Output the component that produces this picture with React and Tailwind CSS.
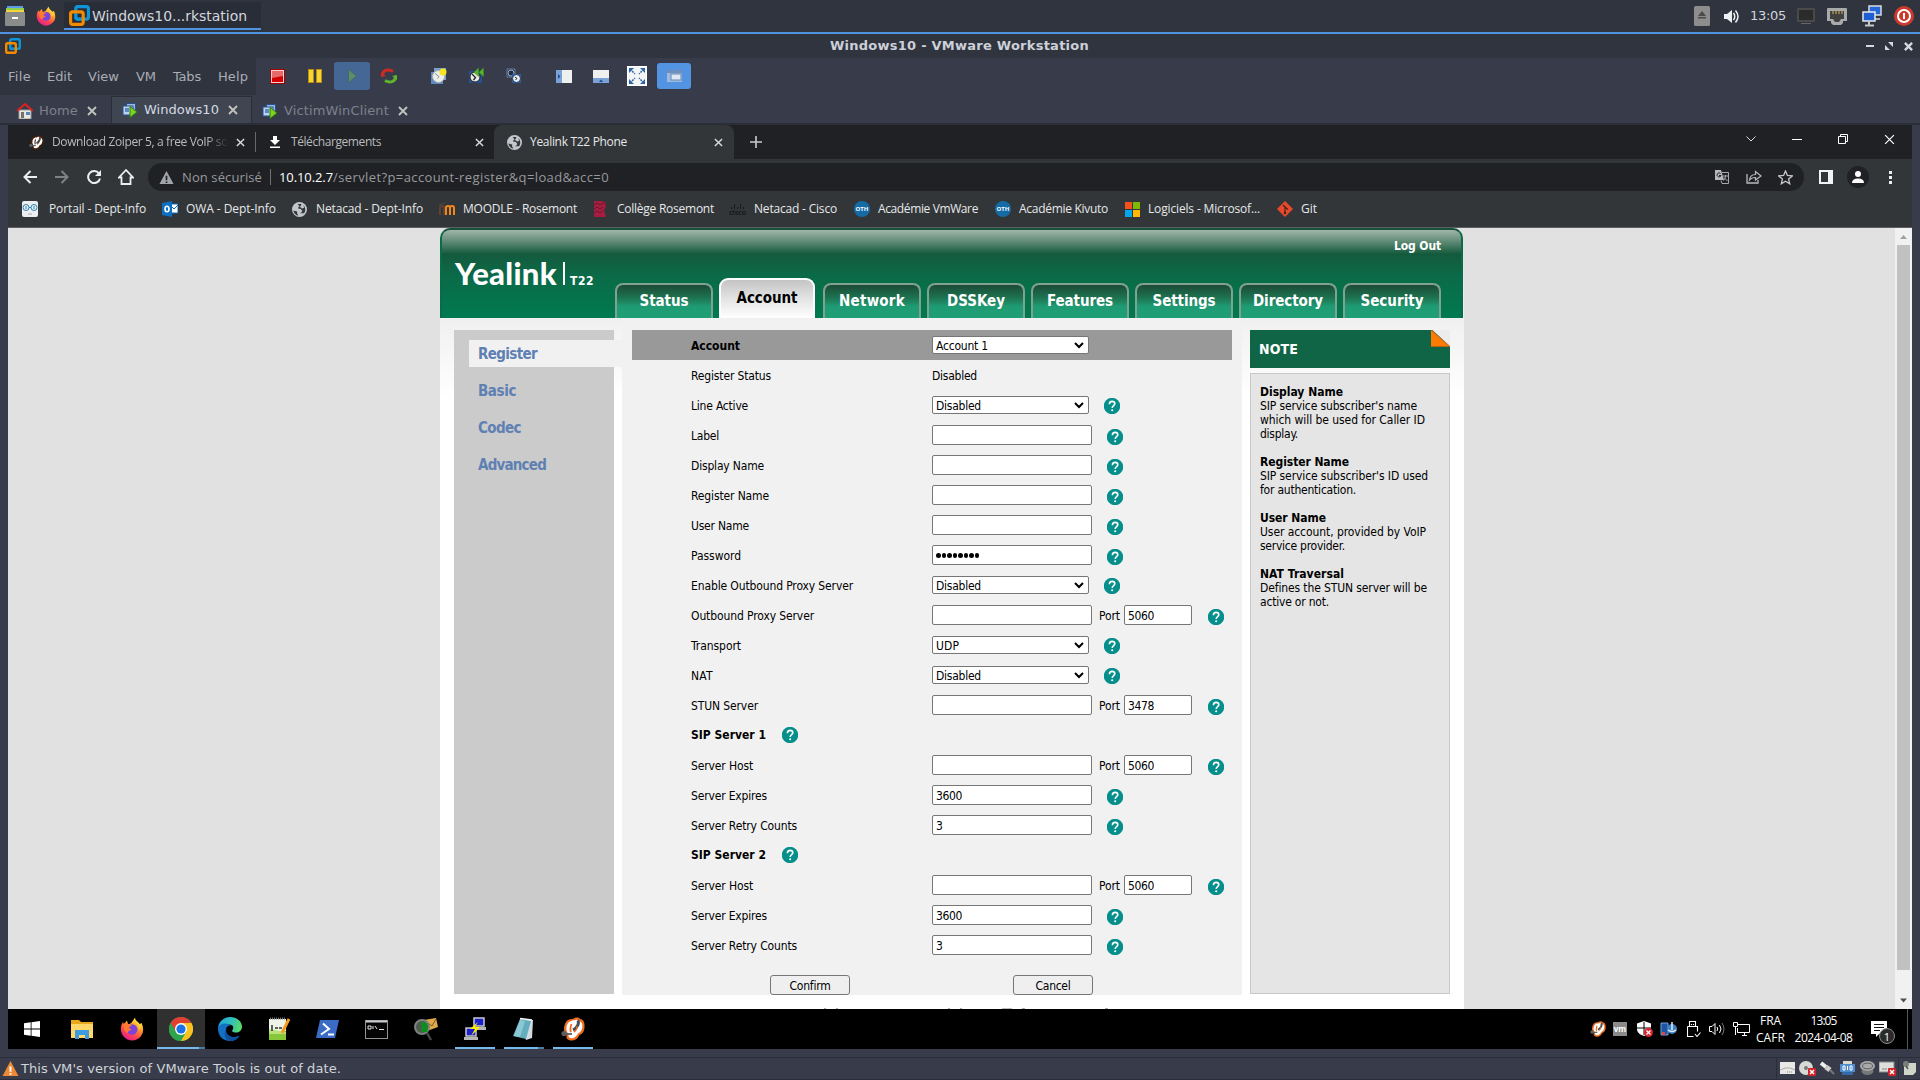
import React, { useLayoutEffect, useRef, useState } from "react";

/* Text whose tracking is adjusted so that the run is exactly w pixels wide. */
function Fit({ w, children, className = "" }) {
  const ref = useRef(null);
  const [ls, setLs] = useState(0);
  useLayoutEffect(() => {
    const natural = ref.current.getBoundingClientRect().width;
    setLs((w - natural) / String(children).length);
  }, [w, children]);
  return (
    <span className={"block shrink-0 whitespace-pre " + className} style={{ width: w }}>
      <span ref={ref} className="inline-block" style={{ letterSpacing: ls }}>{children}</span>
    </span>
  );
}

/* Form text, seated one pixel below the centre of its row. */
const Cell = ({ className = "", ...p }) => <Fit {...p} className={"pt-[2px] " + className} />;

const SYS = "[font-family:'DejaVu_Sans',sans-serif]";
const SEGOE = "[font-family:'Open_Sans','Noto_Sans',sans-serif]";
const TAHOMA = "[font-family:'DejaVu_Sans_Condensed','DejaVu_Sans',sans-serif] [font-stretch:condensed]";

function Svg({ s = 16, h, vb, className = "", children }) {
  return (
    <svg width={s} height={h || s} viewBox={vb || `0 0 ${s} ${h || s}`} fill="none" className={"block shrink-0 " + className}>
      {children}
    </svg>
  );
}

/* ---------- Icons ---------- */
const VmwareIcon = ({ s }) => (
  <Svg s={s} vb="0 0 20 20">
    <rect x="6.5" y="1.5" width="12" height="12" rx="2" stroke="#0f95d7" strokeWidth="3" />
    <rect x="1.5" y="6.5" width="12" height="12" rx="2" stroke="#f38b00" strokeWidth="3" />
    <path d="M6.5 9v3q0 1.5 1.5 1.5h3" stroke="#0f95d7" strokeWidth="2.6" />
  </Svg>
);
const FirefoxIcon = ({ s }) => (
  <Svg s={s} vb="0 0 24 24">
    <defs>
      <linearGradient id="ffg" x1="18" y1="2" x2="6" y2="22" gradientUnits="userSpaceOnUse">
        <stop stopColor="#fff04a" /><stop offset=".35" stopColor="#ff9a28" /><stop offset=".7" stopColor="#ff4450" /><stop offset="1" stopColor="#e3208e" />
      </linearGradient>
    </defs>
    <path d="M15 .5c0 3 3 4 4.800 6.500L21.500 6c2 4 2.500 9-.5 13s-8.500 6-13.500 3.500S.300 15 1 10c.3-2 1-3.500 2-5l.8 2L7 3.500 8 7c2 0 3-.5 4-2s2-3 3-4.500z" fill="url(#ffg)" />
    <circle cx="12.200" cy="12.500" r="5.200" fill="#7b43dd" />
    <path d="M4 8c3-2 6-1 8 1-2 .3-3 1-3.300 2.300l3 .7c-1 2-4 1.500-4.200 4C5 15 3 12 4 8z" fill="#ff7a2c" />
    <path d="M15 5c3 2 4.500 5 3.500 8l2.500-2c0-3-2.500-5-6-6z" fill="#ffd53a" />
  </Svg>
);
const ChromeIcon = ({ s }) => (
  <Svg s={s} vb="0 0 24 24">
    <circle cx="12" cy="12" r="12" fill="#2da44e" />
    <path d="M12 12L1.600 6A12 12 0 0 1 22.400 6z" fill="#e23f33" />
    <path d="M12 6h10.400A12 12 0 0 1 12 24l5.200-9z" fill="#fcc31e" />
    <path d="M1.600 6L6.800 15 12 12V6z" fill="#e23f33" />
    <path d="M1.600 6L6.800 15l5 3L12 24A12 12 0 0 1 1.600 6z" fill="#2da44e" />
    <circle cx="12" cy="12" r="6" fill="#fff" />
    <circle cx="12" cy="12" r="4.600" fill="#1a73e8" />
  </Svg>
);
const EdgeIcon = () => (
  <Svg s={24}>
    <defs>
      <linearGradient id="edg" x1="0" y1="4" x2="24" y2="10" gradientUnits="userSpaceOnUse">
        <stop stopColor="#1fa5df" /><stop offset=".6" stopColor="#35c3b4" /><stop offset="1" stopColor="#5fdd5a" />
      </linearGradient>
    </defs>
    <path d="M0 11C1 4 6 0 12 0c7 0 12 4.500 12 9.500 0 4-3 6-6 6-3.500 0-4.500-1.300-3.500-2.500 1.800-2.400.5-5.500-3.500-5.500-5 0-9 3-11 3.500z" fill="url(#edg)" />
    <path d="M0 12c0-3 3-5.500 7-5.500 2.500 0 4.500.7 5.500 2C9 8.500 7.500 11 8 14c.6 4 4.500 6.500 9 6 2-.2 3.500-.8 4.500-1.300C19.500 22 16 24 12 24 5 24 0 19 0 12z" fill="#1470c4" />
    <path d="M8 14c.6 4 4.500 6.500 9 6 2-.2 3.500-.8 4.500-1.300C19.500 22 16 24 12 24 7 23 5 17 8.500 11.500z" fill="#0e4f9e" />
  </Svg>
);
const ZoiperIcon = ({ s, edge = "#ee6c1f" }) => (
  <Svg s={s} vb="0 0 24 24">
    <path d="M5 5C7 2 10 2 12 2c2-2 6-2 7 0 3 0 5 3 4.500 8 0 4-2 7-5 8-2 4-5 6-9 5.500C6 23 5 21 5.500 18 2 15 2.500 9 5 5z" fill={edge} />
    <path d="M7 6c2-2.500 5-2 6-2.500 2-1.300 4-1 5 .8 3 .7 3.800 3 3.300 6-.4 3-2 5.500-4.300 6.200-1.700 3.300-4 5-7 4.700-2.500-.2-3-2-2.300-4.200C4.500 14 5 9 7 6z" fill="#fff" />
    <path d="M16.500 3.500c2.500 2-.5 8-4.500 9.500" stroke="#4b4f54" strokeWidth="3" />
    <circle cx="3" cy="16.500" r="2.600" fill="#5a5d61" /><path d="M4 17h7" stroke="#5a5d61" strokeWidth="1.800" />
    <path d="M10.500 7c-1.500 4-1.500 6-.5 8" stroke={edge} strokeWidth="1.800" /><path d="M16 9c0 3-1 5-3 6" stroke={edge} strokeWidth="1.200" />
  </Svg>
);
const GlobeIcon = () => (
  <Svg s={15} vb="0 0 16 16">
    <circle cx="8" cy="8" r="8" fill="#c3c6ca" />
    <path d="M1.500 9l4 1v2.500L7 14.500c-3-.3-5-2.500-5.500-5.500zM6 2l4 .2-.5 2L7 5l-.5 2 3 .5L11 9.500l-1 1.800-1.800.7L13 12c2-3 1.500-6.500-1-8.800L13 6l-2 1-2-1.500" fill="#35393c" />
  </Svg>
);
const X = ({ s = 9, c = "#d9dadc", sw = 1.6 }) => (
  <Svg s={s} vb="0 0 10 10"><path d="M1 1l8 8M9 1L1 9" stroke={c} strokeWidth={sw} /></Svg>
);
const Clones = () => (
  <Svg s={16}>
    <rect x="4.500" y="1.500" width="9" height="8" fill="#9ab7dd" stroke="#27508f" /><rect x="1" y="4" width="10" height="9" fill="#bcd3ef" stroke="#27508f" />
    <path d="M3 6h4v4H3z" fill="#5c88c6" /><path d="M8 4.500l7 5.500-7 5.500z" fill="#7ed321" stroke="#2e7d0b" />
  </Svg>
);
const Snapshot = () => (
  <Svg s={18}>
    <path d="M4 1h12v12H4z" fill="#7f9fc9" /><path d="M1 5h12v12H1z" fill="#5f88bd" />
    <circle cx="8.500" cy="9.500" r="6" fill="#eceeec" stroke="#a9adb0" /><path d="M5 6.500l4 3-1.500 2" stroke="#8d9296" /><circle cx="13" cy="5" r="3.500" fill="#f6e51c" />
  </Svg>
);
const Revert = () => (
  <Svg s={18}>
    <path d="M2 4h13v12H2z" fill="#27508f" /><circle cx="8" cy="10" r="5" fill="#e8eae8" stroke="#222" />
    <path d="M5 7l3.500 3.500-2 2.500" stroke="#222" strokeWidth="1.300" /><path d="M11.500 1v8.500L7 5.300zM16.500 1v8.500L12 5.300z" fill="#55b82c" stroke="#3c8f1b" strokeWidth=".6" />
  </Svg>
);
const SnapMgr = () => (
  <Svg s={16}>
    <path d="M1 1h8v8H1z" fill="#1f2e4a" stroke="#6580a8" /><circle cx="5" cy="5" r="3" stroke="#9fa8b4" />
    <path d="M6 6h9v9H6z" fill="#2c5a9c" /><circle cx="10.500" cy="10.500" r="4" fill="#e9ecef" stroke="#173461" /><path d="M9 9l2 1.500-1.500 1.500" stroke="#222" />
  </Svg>
);
const Help = () => (
  <Svg s={16}>
    <circle cx="8" cy="8" r="8.200" fill="#058f8c" />
    <path d="M5.400 6.200C5.400 4.300 6.500 3.400 8.100 3.400s2.700.9 2.700 2.300c0 1.900-2.600 2-2.600 4.200" stroke="#fff" strokeWidth="1.600" />
    <circle cx="8.200" cy="12.300" r="1.050" fill="#fff" />
  </Svg>
);
const Warn = ({ s = 16, fill = "#a2a6aa", mark = "#202124" }) => (
  <Svg s={s} vb="0 0 16 16"><path d="M8 1l7.500 14H.5z" fill={fill} /><path d="M8 6v5M8 12.200v1.600" stroke={mark} strokeWidth="1.800" /></Svg>
);
const RedX = () => (<g><rect x="9" y="8" width="8" height="8" rx="1" fill="#d02028" /><path d="M11 10l4 4M15 10l-4 4" stroke="#fff" strokeWidth="1.500" /></g>);

/* ---------- Host desktop panel ---------- */
function HostPanel() {
  return (
    <div className={"flex h-[34px] items-start border-b-2 border-[#4f92df] bg-[#2f343f] text-[#d3d6dc] " + SYS}>
      <div className="flex h-8 w-16 items-center gap-[11px] pl-[5px]">
        <Svg s={20}>
          <path d="M2 0h16v3H2z" fill="#5a9bea" /><path d="M1 2h18v3H1z" fill="#8fd14f" /><path d="M1 4h18v3H1z" fill="#f5d53c" />
          <rect y="6" width="20" height="14" rx="1" fill="#8a8b8b" /><path d="M7 12h6" stroke="#fff" strokeWidth="2" />
        </Svg>
        <FirefoxIcon s={20} />
      </div>
      <div className="mt-[2px] flex h-7 w-[197px] items-center gap-[2px] border-b-2 border-[#4f92df] bg-[#292d38] pl-[5px]">
        <VmwareIcon s={21} />
        <Fit w={155} className="pt-px text-[14px] leading-[20px]">Windows10...rkstation</Fit>
      </div>
      <div className="ml-auto flex h-8 items-center pr-[6px]">
        <Svg s={16} h={20}><rect width="16" height="20" rx="1.500" fill="#8d8d8d" /><path d="M8 5l4 5H4zM4 11h8v1.500H4z" fill="#4a4a4a" /></Svg>
        <Svg s={15} className="ml-[14px]"><path d="M0 5h3l5-4v13L3 10H0z" fill="#eef0f3" /><path d="M9.500 4q2.500 3.500 0 7M11.500 1.500q5 6 0 12" stroke="#eef0f3" strokeWidth="1.500" /></Svg>
        <Fit w={36} className="ml-[11px] text-[13px] leading-4">13:05</Fit>
        <Svg s={18} h={16} className="ml-[11px]"><rect width="18" height="14" rx="1" fill="#4a4a4a" /><rect x="2" y="2" width="14" height="10" fill="#2b2b2b" /><path d="M4 15.500h10" stroke="#666" /></Svg>
        <Svg s={20} h={17} className="ml-[12px]"><path d="M1 0h18a1 1 0 0 1 1 1v12h-4v2l-2 2H6l-2-2v-2H0V1a1 1 0 0 1 1-1z" fill="#a8a9a9" /><path d="M3 3h14v8h-3l-2 3H8l-2-3H3z" fill="#414141" /><path d="M6 3v3M9 3v3M12 3v3M15 3v3" stroke="#d7b45a" /></Svg>
        <Svg s={20} h={22} className="ml-[15px]">
          <rect x="7" y="1" width="12" height="9" fill="#2467d8" stroke="#d8dbde" strokeWidth="1.500" /><path d="M12 11v3h6" stroke="#aaa" strokeWidth="2" />
          <rect x="1" y="7" width="12" height="9" fill="#1c5fd2" stroke="#e8eaec" strokeWidth="1.500" /><path d="M7 16v4M3 20.500h9" stroke="#c5c7c9" strokeWidth="2" />
        </Svg>
        <Svg s={20} className="ml-[12px]"><circle cx="10" cy="10" r="10" fill="#cc3a2e" /><circle cx="10" cy="10" r="6" stroke="#fff" strokeWidth="2" /><path d="M10 7v6" stroke="#fff" strokeWidth="2" /></Svg>
      </div>
    </div>
  );
}

function TitleBar() {
  return (
    <div className={"flex h-6 items-center bg-[#2f343f] pl-[5px] " + SYS}>
      <VmwareIcon s={16} />
      <Fit w={259} className="ml-[809px] pb-px text-[13px] leading-4 font-bold text-[#ccd0d8]">Windows10 - VMware Workstation</Fit>
      <div className="ml-auto flex items-center gap-[11px] pr-[7px]">
        <span className="h-[2px] w-2 bg-[#d5d8de]" />
        <Svg s={8}><path d="M3 0h5v5zM0 3v5h5z" fill="#d5d8de" /></Svg>
        <X s={9} c="#d5d8de" sw={2.6} />
      </div>
    </div>
  );
}

const MENU = [["File", 23, "w-[39px]"], ["Edit", 25, "w-[41px]"], ["View", 31, "w-[48px]"], ["VM", 20, "w-[37px]"], ["Tabs", 28, "w-[45px]"], ["Help", 30, "w-[38px]"]];

function MenuBar() {
  return (
    <div className={"flex h-[37px] bg-[#383c4a] " + SYS}>
      <div className="flex w-64 items-center bg-[#2f343f] pl-2 text-[13px] leading-4 text-[#a9adb6]">
        {MENU.map(([t, w, c]) => <div key={t} className={c}><Fit w={w}>{t}</Fit></div>)}
      </div>
      <div className="flex items-center pb-px">
        <Svg s={15} className="ml-[14px]"><rect x=".5" y=".5" width="14" height="14" fill="#d40000" stroke="#a30000" /><rect x="1.500" y="1.500" width="12" height="12" stroke="#f6d0d0" /><path d="M2 2h11v5L2 9z" fill="#e66a6a" /></Svg>
        <Svg s={14} className="ml-[23px]"><rect x=".5" y=".5" width="5" height="13" fill="#f6d535" stroke="#b78d12" /><rect x="8.500" y=".5" width="5" height="13" fill="#f6d535" stroke="#b78d12" /></Svg>
        <div className="ml-[12px] flex h-7 w-9 items-center justify-center rounded-[3px] bg-[#456796]"><Svg s={9} h={14}><path d="M.5.500l8 6.500-8 6.500z" fill="#5b8d6e" stroke="#3f705d" /></Svg></div>
        <Svg s={16} className="ml-[11px]">
          <path d="M1.500 7C1.500 2.500 7 .5 12 3.500" stroke="#cf2a22" strokeWidth="3" /><path d="M0 4l5 4-5 1z" fill="#cf2a22" />
          <path d="M14.500 9C14.500 13.500 9 15.500 4 12.500" stroke="#5db52c" strokeWidth="3" /><path d="M16 12l-5-4 5-1z" fill="#5db52c" />
        </Svg>
        <div className="ml-[33px]"><Snapshot /></div>
        <div className="ml-[19px]"><Revert /></div>
        <div className="ml-[21px]"><SnapMgr /></div>
        <Svg s={16} h={13} className="ml-[34px]"><rect width="16" height="13" fill="#eef0f0" /><rect width="6" height="13" fill="#7aa2d6" /><path d="M2 4l2.500 2.500L2 9z" fill="#1f4c8f" /></Svg>
        <Svg s={16} h={13} className="ml-[21px]"><rect width="16" height="13" fill="#eef0f0" /><rect y="8" width="16" height="5" fill="#7aa2d6" /><path d="M6 12l2-2.500 2 2.500z" fill="#1f4c8f" /></Svg>
        <Svg s={20} className="ml-[18px]"><rect x=".5" y=".5" width="19" height="19" fill="#f4f5f5" stroke="#fff" /><path d="M2 2h5L2 7zM18 2h-5l5 5zM2 18h5l-5-5zM18 18h-5l5-5z" fill="#2d62ae" /><path d="M3 3l5 5M17 3l-5 5M3 17l5-5M17 17l-5-5" stroke="#2d62ae" strokeWidth="1.500" strokeDasharray="2 1" /></Svg>
        <div className="ml-[10px] flex h-[26px] w-[34px] items-center justify-center rounded-[3px] bg-[#5294e2]"><Svg s={15} h={12}><rect width="15" height="12" fill="#9dbbe0" /><path d="M0 0h15v3H0z" fill="#6c8fbd" /><rect x="4" y="4" width="10" height="6" fill="#dfe7f1" stroke="#6687b2" /></Svg></div>
      </div>
    </div>
  );
}

function VmTabs() {
  return (
    <div className={"flex h-[30px] items-end border-b-2 border-[#2b2e39] bg-[#383c4a] text-[13px] leading-4 text-[#7d818c] " + SYS}>
      <div className="flex h-[26px] w-[111px] items-center pt-px pl-[17px]">
        <Svg s={16}><path d="M2 7h12v9H2z" fill="#e9e7df" stroke="#999" /><path d="M0 8l8-7 8 7" stroke="#e02020" strokeWidth="2" /><path d="M4 9h3v6H4z" fill="#75706a" /><path d="M9 9h4v3H9z" fill="#5a86bd" /></Svg>
        <Fit w={39} className="ml-[6px]">Home</Fit><div className="ml-[9px]"><X s={10} c="#c3c5bd" sw={1.8} /></div>
      </div>
      <div className="flex h-[27px] w-[141px] items-center border-x border-t border-[#2b2e39] bg-[#404552] pl-[10px] text-[#d3dae3]">
        <Clones /><Fit w={75} className="ml-[6px]">Windows10</Fit><div className="ml-[9px]"><X s={10} c="#c3c5bd" sw={1.8} /></div>
      </div>
      <div className="flex h-[26px] items-center pt-px pl-[10px]">
        <Clones /><Fit w={105} className="ml-[6px]">VictimWinClient</Fit><div className="ml-[9px]"><X s={10} c="#c3c5bd" sw={1.8} /></div>
      </div>
    </div>
  );
}

/* ---------- Chrome ---------- */
function ChromeTabs() {
  return (
    <div className={"flex h-[34px] bg-[#202124] text-[12px] leading-4 text-[#b9bbbe] " + SEGOE}>
      <div className="flex w-[247px] items-center pl-[21px]">
        <ZoiperIcon s={15} edge="#4a1f0a" />
        <Fit w={176} className="ml-[8px] overflow-hidden [mask-image:linear-gradient(90deg,#000_88%,transparent)]">Download Zoiper 5, a free VoIP so</Fit>
        <div className="ml-[8px]"><X /></div>
      </div>
      <div className="flex w-[239px] items-center">
        <span className="h-5 w-px bg-[#66696c]" />
        <Svg s={10} h={12} className="ml-[14px]"><path d="M3 0h4v4h3L5 9 0 4h3zM0 10.500h10V12H0z" fill="#fff" /></Svg>
        <Fit w={90} className="ml-[11px]">Téléchargements</Fit><div className="ml-[94px]"><X /></div>
      </div>
      <div className="flex w-[240px] items-center rounded-t-lg bg-[#323639] pl-[13px] text-[#e6e7e9]">
        <GlobeIcon /><Fit w={97} className="ml-[8px]">Yealink T22 Phone</Fit><div className="ml-[87px]"><X /></div>
      </div>
      <div className="flex items-center pl-[16px]"><Svg s={12}><path d="M6 0v12M0 6h12" stroke="#c9cbce" strokeWidth="1.600" /></Svg></div>
      <div className="ml-auto flex h-7 items-center pr-[17px]">
        <Svg s={10} h={6}><path d="M.5.500L5 5 9.500.500" stroke="#ddd" /></Svg>
        <span className="ml-[36px] h-px w-[10px] bg-white" />
        <Svg s={10} className="ml-[36px]"><path d="M.5 2.500h7v7h-7zM2.500 2.500v-2h7v7h-2" stroke="#fff" /></Svg>
        <div className="ml-[36px]"><X s={11} c="#fff" sw={1.1} /></div>
      </div>
    </div>
  );
}

function AddressBar() {
  return (
    <div className={"flex h-9 items-center bg-[#323639] " + SEGOE}>
      <Svg s={14} className="ml-[15px]"><path d="M7.500 1L1.500 7l6 6M1.500 7H14" stroke="#eceef0" strokeWidth="2" /></Svg>
      <Svg s={14} className="ml-[18px]"><path d="M6.500 1l6 6-6 6M12.500 7H0" stroke="#7f8285" strokeWidth="2" /></Svg>
      <Svg s={14} className="ml-[18px]"><path d="M12 3.500A6 6 0 1 0 13 8.500" stroke="#eceef0" strokeWidth="2" /><path d="M14 0v6H8z" fill="#eceef0" /></Svg>
      <Svg s={16} className="ml-[17px]"><path d="M8 1L1 8.500h2.500V15h9V8.500H15z" stroke="#eceef0" strokeWidth="1.800" /></Svg>
      <div className="ml-[14px] flex h-7 w-[1656px] items-center rounded-full bg-[#202124] pl-[11px] text-[13px] leading-4 text-[#969a9e]">
        <Warn s={15} />
        <Fit w={80} className="ml-[8px]">Non sécurisé</Fit>
        <span className="mx-[8px] h-4 w-px bg-[#707376]" />
        <Fit w={54} className="text-white">10.10.2.7</Fit>
        <Fit w={276}>/servlet?p=account-register&amp;q=load&amp;acc=0</Fit>
        <div className="ml-auto flex items-center pr-[11px]">
          <Svg s={14}><path d="M0 0h6l3 10H0z" fill="#b6b9bc" /><path d="M5.500 3.500A2 2 0 1 0 6 5.500H4" stroke="#202124" /><path d="M7 2.500h6.500v11H7l-1-3M8 6h5M10.500 5v1c0 2-1 3.500-2 4.500M9 7.500l3.500 3.500" stroke="#a6a9ac" /></Svg>
          <Svg s={16} h={14} className="ml-[17px]"><path d="M1 4v9h11v-3" stroke="#b6b9bc" strokeWidth="1.300" /><path d="M3.500 10C4 6 6 4.500 9.500 4.500V1.500l5.500 4.500-5.500 4V7.500C7 7.500 5 8 3.500 10z" stroke="#b6b9bc" strokeWidth="1.200" /></Svg>
          <Svg s={15} className="ml-[16px]"><path d="M7.500 1l1.900 4.500 4.900.4-3.700 3.200 1.100 4.700-4.200-2.500-4.200 2.500 1.100-4.700L.700 5.900l4.900-.4z" stroke="#c6c9cc" strokeWidth="1.300" /></Svg>
        </div>
      </div>
      <Svg s={14} className="ml-[15px]"><rect x="1" y="1" width="12" height="12" stroke="#f1f3f4" strokeWidth="2" /><path d="M9 1h4v12H9z" fill="#f1f3f4" /></Svg>
      <div className="ml-[14px] flex size-[22px] items-center justify-center rounded-full bg-[#202124]"><Svg s={12}><circle cx="6" cy="3" r="3" fill="#fff" /><path d="M0 12c0-3 2-4.500 6-4.500S12 9 12 12z" fill="#fff" /></Svg></div>
      <Svg s={3} h={13} className="ml-[20px]"><path d="M0 0h3v3H0zM0 5h3v3H0zM0 10h3v3H0z" fill="#eceef0" /></Svg>
    </div>
  );
}

const Oth = () => (
  <span className="flex size-4 items-center justify-center rounded-full bg-[#146ba5] text-[6px] leading-none font-bold text-white"><span>OTH</span></span>
);
const BOOKMARKS = [
  ["Portail - Dept-Info", 97, "w-[140px] gap-[11px]", <Svg s={16}><rect width="16" height="16" rx="2" fill="#eceff1" /><circle cx="4" cy="6.500" r="3" stroke="#2b84b5" /><circle cx="12" cy="6.500" r="3" stroke="#2b84b5" /><path d="M7 6.500h2M4 5v3M12 5v3" stroke="#2b84b5" /><path d="M6 13h4" stroke="#aaa" /></Svg>],
  ["OWA - Dept-Info", 90, "w-[130px] gap-[8px]", <Svg s={16}><path d="M9 3h7v9H9z" fill="#fff" stroke="#0b6fc4" /><path d="M10 6l2 2 4-4" stroke="#0b6fc4" /><path d="M0 2l10-2v16L0 14z" fill="#0b6fc4" /><ellipse cx="5" cy="8" rx="2" ry="2.700" stroke="#fff" strokeWidth="1.600" /></Svg>],
  ["Netacad - Dept-Info", 107, "w-[147px] gap-[9px]", <GlobeIcon />],
  ["MOODLE - Rosemont", 114, "w-[154px] gap-[8px]", <Svg s={16}><path d="M1 14V7q0-2 2-2t2 2v7" stroke="#5d4332" strokeWidth="2" /><path d="M7 14V6.500q0-1.500 2-1.500t2 1.500V14M11 14V6.500Q11 5 13 5t2 1.500V14" stroke="#f0861c" strokeWidth="2" /><path d="M0 4l6-2" stroke="#52473e" /></Svg>],
  ["Collège Rosemont", 97, "w-[137px] gap-[9px]", <Svg s={15} h={16}><path d="M1 0h8q5 1 4 5-1 3-2 4l2 7H1z" fill="#a51d3f" /><path d="M1 4l3-2 3 2 3-2 3 2M1 8l3-2 3 2 3-2M1 12l3-2 3 2 3-2" stroke="#6e1830" /></Svg>],
  ["Netacad - Cisco", 83, "w-[124px] gap-[9px]", <span className="flex w-[15px] flex-col items-center"><Svg s={15} h={7}><path d="M1.500 4v2M4.500 1v5M7.500 4v2M10.500 1v5M13.500 4v2" stroke="#17191b" /></Svg><span className="text-[7px] leading-[6px] font-bold text-[#17191b]">cisco</span></span>],
  ["Académie VmWare", 100, "w-[141px] gap-[8px]", <Oth />],
  ["Académie Kivuto", 89, "w-[130px] gap-[8px]", <Oth />],
  ["Logiciels - Microsof...", 112, "w-[152px] gap-[8px]", <Svg s={15}><path d="M0 0h7v7H0z" fill="#f4511e" /><path d="M8 0h7v7H8z" fill="#7fba00" /><path d="M0 8h7v7H0z" fill="#05a6f0" /><path d="M8 8h7v7H8z" fill="#ffba08" /></Svg>],
  ["Git", 16, "w-[60px] gap-[8px]", <Svg s={16}><path d="M8 0l8 8-8 8-8-8z" fill="#e8492c" /><path d="M6 4l2 2v6M8 6l3 2.500" stroke="#40231d" strokeWidth="1.200" /><circle cx="8" cy="12" r="1.200" fill="#40231d" /></Svg>],
];

function Bookmarks() {
  return (
    <div className={"flex h-[33px] items-center border-b border-[#5b5f62] bg-[#323639] pb-[4px] pl-[14px] text-[12px] leading-4 text-[#e6e8ea] " + SEGOE}>
      {BOOKMARKS.map(([t, w, c, icon]) => (
        <div key={t} className={"flex shrink-0 items-center " + c}>{icon}<Fit w={w}>{t}</Fit></div>
      ))}
    </div>
  );
}

/* ---------- Yealink page ---------- */
const NAV = [["Status", 49], ["Account", 61], ["Network", 66], ["DSSKey", 58], ["Features", 66], ["Settings", 63], ["Directory", 70], ["Security", 63]];

function PageHeader() {
  return (
    <div className="flex h-[90px] w-[1023px] flex-col rounded-t-[10px] border-x-2 border-t-2 border-[#145239] border-x-[#0b6b48] bg-[linear-gradient(180deg,#a0b5a9_0px,#6f9482_9px,#145a3d_24px,#0b6a48_45px,#007a50_88px)] text-white">
      <div className="flex h-[30px] justify-end pt-[7px] pr-[20px]"><Fit w={47} className="text-[12px] leading-[18px] font-bold">Log Out</Fit></div>
      <div className="flex h-[58px] items-end">
        <div className="flex h-full w-[173px] items-start pl-[13px]">
          <Fit w={102} className="mt-[-3px] text-[31px] leading-[32px] font-black [font-family:'Lato','Open_Sans',sans-serif]">Yealink</Fit>
          <span className="mt-[2px] ml-[6px] h-[23px] w-[2px] bg-white" />
          <Fit w={24} className="mt-[12px] ml-[5px] text-[12px] leading-[18px] font-bold">T22</Fit>
        </div>
        {NAV.map(([t, w]) => t === "Account" ? (
          <div key={t} className="mr-[8px] flex h-10 w-24 items-center justify-center rounded-t-[9px] border-x-2 border-t-2 border-white bg-[linear-gradient(180deg,#c4c4c4,#e4e4e4_50%,#fff)] pb-[2px] text-[15px] leading-5 font-bold text-black"><Fit w={w}>{t}</Fit></div>
        ) : (
          <div key={t} className="mr-[6px] flex h-[35px] w-[98px] items-center justify-center rounded-t-[8px] border-x-2 border-t-2 border-[#7fa291] bg-[linear-gradient(180deg,#1c4a36,#1d7552_40%,#1f9b73_65%,#1f9f76)] pb-[2px] text-[15px] leading-5 font-bold"><Fit w={w}>{t}</Fit></div>
        ))}
      </div>
    </div>
  );
}

const SelectBox = ({ text, w }) => (
  <div className="flex h-[18px] w-[157px] shrink-0 items-center justify-between rounded-[2px] border border-[#767676] bg-white pr-[4px] pl-[3px]">
    <Cell w={w}>{text}</Cell>
    <Svg s={10} h={7}><path d="M1 1l4 4 4-4" stroke="#000" strokeWidth="2" /></Svg>
  </div>
);
const InputBox = ({ text = "", w = 1, className = "w-40" }) => (
  <div className={"flex h-5 shrink-0 items-center rounded-[2px] border border-[#767676] bg-white pl-[3px] " + className}>{text && <Cell w={w}>{text}</Cell>}</div>
);

const ROWS = [
  ["Register Status", 80, "text"], ["Line Active", 57, "select", "Disabled", 45], ["Label", 28, "input"], ["Display Name", 73, "input"],
  ["Register Name", 78, "input"], ["User Name", 58, "input"], ["Password", 50, "password"], ["Enable Outbound Proxy Server", 162, "select", "Disabled", 45],
  ["Outbound Proxy Server", 123, "port", "5060"], ["Transport", 50, "select", "UDP", 23], ["NAT", 22, "select", "Disabled", 45], ["STUN Server", 67, "port", "3478"],
  ["SIP Server 1", 75, "head"], ["Server Host", 62, "port", "5060"], ["Server Expires", 76, "input", "3600", 26], ["Server Retry Counts", 106, "input", "3", 7],
  ["SIP Server 2", 75, "head"], ["Server Host", 62, "port", "5060"], ["Server Expires", 76, "input", "3600", 26], ["Server Retry Counts", 106, "input", "3", 7],
];

function FormRow({ row: [label, lw, kind, value, vw] }) {
  if (kind === "head")
    return <div className="flex h-[30px] items-center pl-[69px]"><Fit w={75} className="font-bold">{label}</Fit><div className="ml-[16px]"><Help /></div></div>;
  return (
    <div className="flex h-[30px] items-center">
      <div className="w-[310px] pl-[69px]"><Cell w={lw}>{label}</Cell></div>
      {kind === "text" && <Cell w={45}>Disabled</Cell>}
      {kind === "select" && <><SelectBox text={value} w={vw} /><div className="pt-[2px] pl-[15px]"><Help /></div></>}
      {kind === "input" && <><InputBox text={value} w={vw} /><div className="pt-[4px] pl-[15px]"><Help /></div></>}
      {kind === "password" && (
        <><div className="flex h-5 w-40 items-center gap-px rounded-[2px] border border-[#767676] bg-white pt-px pl-[3px]">{[0, 1, 2, 3, 4, 5, 6, 7].map((i) => <span key={i} className="size-[4.500px] rounded-full bg-black" />)}</div><div className="pt-[4px] pl-[15px]"><Help /></div></>
      )}
      {kind === "port" && <><InputBox /><Cell w={21} className="ml-[7px]">Port</Cell><InputBox text={value} w={26} className="ml-[4px] w-[68px]" /><div className="pt-[4px] pl-[16px]"><Help /></div></>}
    </div>
  );
}

const NOTES = [
  ["Display Name", 83, [["SIP service subscriber's name", 157], ["which will be used for Caller ID", 165], ["display.", 38]]],
  ["Register Name", 89, [["SIP service subscriber's ID used", 168], ["for authentication.", 96]]],
  ["User Name", 66, [["User account, provided by VoIP", 166], ["service provider.", 85]]],
  ["NAT Traversal", 84, [["Defines the STUN server will be", 167], ["active or not.", 69]]],
];
const SIDE = [["Register", 59], ["Basic", 38], ["Codec", 43], ["Advanced", 68]];
const Btn = ({ t, w, className }) => (
  <div className={"flex h-5 w-20 items-center justify-center rounded-[3px] border border-[#767676] bg-[#efefef] " + className}><Cell w={w}>{t}</Cell></div>
);

function PageBody() {
  return (
    <div className="flex h-[677px]">
      <div className="mt-3 ml-[14px] flex h-[664px] w-40 flex-col bg-[#cbcbcb] pt-[5px] text-[15px] leading-5 font-bold text-[#5f80b2]">
        {SIDE.map(([t, w], i) => (
          <div key={t} className="flex h-[37px] items-center pl-[15px]">
            <div className={i ? "pt-px pl-[9px]" : "flex h-[27px] w-[153px] shrink-0 items-center bg-[#f1f1f1] pt-px pl-[9px]"}><Fit w={w}>{t}</Fit></div>
          </div>
        ))}
      </div>
      <div className="ml-2 flex w-[620px] flex-col bg-[#f1f1f1] pt-3">
        <div className="mx-[10px] flex h-[30px] shrink-0 items-center bg-[#999]">
          <div className="w-[300px] pl-[59px]"><Cell w={49} className="font-bold">Account</Cell></div>
          <SelectBox text="Account 1" w={52} />
        </div>
        {ROWS.map((r, i) => <FormRow key={i} row={r} />)}
        <div className="mt-[15px] flex"><Btn t="Confirm" w={41} className="ml-[148px]" /><Btn t="Cancel" w={35} className="ml-[163px]" /></div>
      </div>
      <div className="mt-3 ml-2 flex w-[200px] flex-col">
        <div className="flex h-[38px] justify-between bg-[#0f6545] text-white">
          <Fit w={39} className="mt-[9px] ml-[9px] text-[14px] leading-5 font-bold">NOTE</Fit>
          <Svg s={19} h={17}><path d="M1 0h18v17z" fill="#ececec" /><path d="M0 0l19 17H0z" fill="#ff7a00" /><path d="M1 0l18 16.500H0" stroke="#a85b1c" strokeWidth=".8" /></Svg>
        </div>
        <div className="mt-[5px] flex h-[621px] flex-col gap-[14px] border border-[#c8c8c8] bg-[#e5e5e5] pt-[11px] pl-[9px] leading-[14px]">
          {NOTES.map(([t, w, lines]) => (
            <div key={t}><Fit w={w} className="font-bold">{t}</Fit>{lines.map(([l, lw]) => <Fit key={l} w={lw}>{l}</Fit>)}</div>
          ))}
        </div>
      </div>
    </div>
  );
}

function WebPage() {
  return (
    <div className={"flex h-[781px] overflow-hidden bg-[#e1e1e1] text-[12px] leading-4 text-black " + TAHOMA}>
      <div className="ml-[432px] flex h-full w-[1024px] flex-col bg-white bg-[linear-gradient(180deg,#e1e1e1_20px,#f0f0f0_90px,#fff_170px)]">
        <PageHeader />
        <PageBody />
        <div className="mt-[13px] flex h-px gap-[10px] pl-[384px]">
          <span className="w-[2px] bg-[#aaa]" /><span className="w-[2px] bg-[#aaa]" /><span className="ml-[100px] w-[2px] bg-[#aaa]" /><span className="w-[2px] bg-[#aaa]" /><span className="ml-[30px] w-[10px] bg-[#bbb]" /><span className="w-[3px] bg-[#aaa]" /><span className="ml-[70px] w-[3px] bg-[#aaa]" />
        </div>
      </div>
      <div className="ml-auto flex h-full w-[17px] flex-col items-center justify-between bg-[#f1f1f1]">
        <Svg s={17}><path d="M5 11h7L8.500 7z" fill="#a0a0a0" /></Svg>
        <div className="mb-auto h-[725px] w-[13px] bg-[#c1c1c1]" />
        <Svg s={17}><path d="M5 6.500h7l-3.500 4z" fill="#505050" /></Svg>
      </div>
    </div>
  );
}

/* ---------- Windows taskbar ---------- */
const TASKS = [
  ["w-[49px] pr-px", "", <Svg s={16}><path d="M0 2.200l6.700-.9v6.300H0zM7.500 1.200L16 0v7.600H7.500zM0 8.400h6.700v6.300L0 13.800zM7.500 8.400H16V16l-8.500-1.200z" fill="#fff" /></Svg>],
  ["w-[50px]", "", <Svg s={22} h={19}><path d="M0 0h8l2 2h12v16H0z" fill="#e8a91d" /><path d="M0 4h22v14H0z" fill="#ffd867" /><path d="M4 10h14v9h-4v-4H8v4H4z" fill="#3d9be0" /></Svg>],
  ["w-[50px]", "", <FirefoxIcon s={24} />],
  ["w-[48px] bg-[#303030]", "w-full", <ChromeIcon s={24} />],
  ["w-[49px]", "", <EdgeIcon />],
  ["w-[49px]", "", <Svg s={22} h={24}><path d="M1 2h17v21H1z" fill="#eef3e8" /><path d="M1 14h17v9H1z" fill="#86c83a" /><path d="M1 12l17 3v2H1z" fill="#b9e27a" /><path d="M4 8v6M7 11h3M11 11h3" stroke="#333" strokeWidth="1.500" /><path d="M2 1.500h16" stroke="#777" strokeDasharray="1 1" strokeWidth="2" /><path d="M21 2l-7 14" stroke="#f29c1f" strokeWidth="3" /></Svg>],
  ["w-[49px]", "", <Svg s={23} h={18}><path d="M4 0h19l-4 18H0z" fill="#3b6cc5" /><path d="M7 3.500l6 5.500-8 5.500M12 14.500h6" stroke="#fff" strokeWidth="2" /></Svg>],
  ["w-[49px]", "", <Svg s={23} h={19}><rect x=".5" y=".5" width="22" height="18" fill="#050505" stroke="#8f9498" /><path d="M1 1.500h21" stroke="#c8cccf" strokeWidth="2" /><path d="M3 6h3v3H3zM8 6v3M10 6l2 3M14 9.500h5" stroke="#e5e5e5" /></Svg>],
  ["w-[49px]", "", <Svg s={24}><path d="M10 3L22 1l2 9-11 4z" fill="#e0a94a" /><path d="M11 4l7 5 4-7" stroke="#7a5a22" /><circle cx="8" cy="10" r="7" fill="#4e5a4e" stroke="#7c837e" strokeWidth="2" /><path d="M9 5v10M12 6v9" stroke="#0d8f1c" strokeWidth="3" /><path d="M13 16l4 7" stroke="#444" strokeWidth="2.500" /></Svg>],
  ["w-[49px]", "w-10", <Svg s={24}><rect x="11" y="1" width="10" height="8" fill="#1b1fd0" stroke="#c9c9c9" strokeWidth="1.500" /><path d="M10 10h13v3H10z" fill="#b7b7b7" /><rect x="3" y="11" width="10" height="8" fill="#1b1fd0" stroke="#c9c9c9" strokeWidth="1.500" /><path d="M1 20h14v3H1z" fill="#b7b7b7" /><path d="M15 5L7 12h5l-4 7 9-9h-5z" fill="#ffee00" /></Svg>],
  ["w-[49px]", "w-10", <Svg s={24}><path d="M8 2l13 1-1 18-6 2z" fill="#d3dbe0" /><path d="M8 2l11 2-5 18L1 19z" fill="#62aebf" /><path d="M8 3l5 1-5 16-6-1z" fill="#8cc8d4" /><path d="M8 1.500l12 1.500" stroke="#f4f4f4" strokeWidth="1.500" /></Svg>],
  ["w-[49px]", "w-10", <ZoiperIcon s={24} />],
];

function Taskbar() {
  return (
    <div className={"flex h-10 bg-black text-white " + SEGOE}>
      {TASKS.map(([c, bar, icon], i) => (
        <div key={i} className={"flex shrink-0 flex-col items-center " + c}>
          <div className="flex h-[38px] items-center pt-[2px]">{icon}</div>
          {bar && <div className={"flex h-[2px] justify-end bg-[#76b9ed] " + bar}>{(i === 3 || i === 10) && <span className="w-[6px] bg-[#4d7ba1]" />}</div>}
        </div>
      ))}
      <div className="ml-auto flex items-center text-[12px] leading-[17px]">
        <ZoiperIcon s={16} />
        <div className="ml-[7px] flex size-[14px] items-center justify-center bg-[#8a8a8a] text-[8px] leading-none font-bold"><span>vm</span></div>
        <Svg s={17} className="ml-[10px]"><path d="M7 0l7 2.500V8c0 4-4 6-7 7-3-1-7-3-7-7V2.500z" fill="#fff" /><path d="M7 1v13M0 7h14" stroke="#000" /><circle cx="11.500" cy="11.500" r="4.500" fill="#d9232e" /><path d="M9.500 9.500l4 4M13.500 9.500l-4 4" stroke="#fff" strokeWidth="1.200" /></Svg>
        <Svg s={17} className="ml-[6px]"><path d="M1 2h7v12H1z" fill="#1d55a3" stroke="#6fa4df" /><circle cx="12" cy="8" r="5" fill="#3e83c4" /><path d="M12 1v8M8 9q4 3 8 0" stroke="#e4eef7" strokeWidth="1.500" /><path d="M2 11h3v3H2z" fill="#e04747" /></Svg>
        <Svg s={14} h={17} className="ml-[10px]"><path d="M2.500.500h6v5h-6zM.500 5.500h10v5M.500 5.500v10h6M4.500 3v1M6.500 3v1M8 13l2 2.500 3.500-4" stroke="#fff" strokeWidth="1.100" /></Svg>
        <Svg s={16} h={14} className="ml-[8px]"><path d="M.5 4.500h2.500l3-3v11l-3-3H.500z" stroke="#fff" /><path d="M8 5q1.500 2 0 4M10.500 3q3 4 0 8" stroke="#fff" /><path d="M13 1q4 6 0 12" stroke="#777" /></Svg>
        <Svg s={17} h={14} className="ml-[8px]"><path d="M5 2.500h11.500v8H4.500V6M9 13.500h5M11.500 11v2.500M.500.500h4v4h-4zM2.500 5v8" stroke="#fff" /></Svg>
        <div className="ml-[6px] flex w-[29px] flex-col items-center"><Fit w={21}>FRA</Fit><Fit w={29}>CAFR</Fit></div>
        <div className="ml-[9px] flex w-[59px] flex-col items-center"><Fit w={26}>13:05</Fit><Fit w={58}>2024-04-08</Fit></div>
        <div className="ml-[18px] flex h-10 w-6 items-start pt-[11px]">
          <Svg s={16} h={18}><path d="M0 1h16v13H8l-3 3v-3H0z" fill="#fff" /><path d="M3 4.500h10M3 7.500h10M3 10.500h6" stroke="#111" /></Svg>
          <span className="mt-[8px] -ml-[8px] flex size-4 shrink-0 items-center justify-center rounded-full border border-[#8a8a8a] bg-[#2b2b2b] text-[11px] leading-none"><span>1</span></span>
        </div>
        <span className="mr-[4px] ml-[12px] h-10 w-px bg-[#555]" />
      </div>
    </div>
  );
}

function StatusBar() {
  return (
    <div className={"flex h-[23px] items-center border-y border-[#2b2e39] bg-[#383c4a] pl-[2px] text-[13px] leading-4 text-[#d0d4db] " + SYS}>
      <Warn s={17} fill="#ee8a33" mark="#fff" />
      <Fit w={320} className="ml-[2px]">This VM's version of VMware Tools is out of date.</Fit>
      <div className="ml-auto flex h-full items-center gap-[3px] border-l border-[#2b2e39] pr-[2px] pl-[2px]">
        <Svg s={17}><rect x="1" y="2" width="15" height="12" fill="#e8e8e6" /><path d="M1 10l5-2h5l5 2" stroke="#aaa" /><path d="M8 12h6" stroke="#888" strokeDasharray="1 1" /></Svg>
        <Svg s={17}><circle cx="7" cy="8" r="7" fill="#d8dad8" /><circle cx="7" cy="8" r="2" fill="#777" /><RedX /></Svg>
        <Svg s={17}><path d="M2 3l5 4" stroke="#eee" strokeWidth="4" /><path d="M7 7l4 3" stroke="#cfcfc8" strokeWidth="5" /><path d="M11 10l4 4" stroke="#777" strokeWidth="2" /></Svg>
        <Svg s={17}><path d="M4 1h9v3H4z" fill="#d9d9d0" /><path d="M1 4h15v8H1z" fill="#4f8ccb" /><path d="M3 12h11v3H3z" fill="#3468a6" /><path d="M4 6h2v4H4zM8.500 6v4M11 6h2v4h-2z" stroke="#fff" /></Svg>
        <Svg s={17}><ellipse cx="8.500" cy="11" rx="6" ry="4" fill="#777" /><ellipse cx="8.500" cy="6" rx="7.500" ry="5" fill="#a9a9a9" /><ellipse cx="8.500" cy="6" rx="5" ry="2.800" stroke="#5d5d5d" /></Svg>
        <Svg s={17}><rect x="0" y="2" width="15" height="10" fill="#dededc" stroke="#888" /><path d="M3 9h5" stroke="#888" /><RedX /></Svg>
      </div>
      <div className="flex h-full w-[22px] items-center justify-center border-l border-[#2b2e39]"><Svg s={15}><path d="M2 2h12v9l-3 3H2z" fill="#cfd6c8" /><circle cx="4" cy="3" r="3" fill="#7a7f78" /><path d="M4 5l2 3" stroke="#555" strokeWidth="1.500" /></Svg></div>
    </div>
  );
}

export default function App() {
  return (
    <div className="flex h-[1080px] w-[1920px] flex-col overflow-hidden bg-[#383c4a]">
      <HostPanel />
      <TitleBar />
      <MenuBar />
      <VmTabs />
      <div className="mr-2 ml-2 flex h-[924px] shrink-0 flex-col">
        <ChromeTabs />
        <AddressBar />
        <Bookmarks />
        <WebPage />
        <Taskbar />
      </div>
      <div className="h-2 shrink-0" />
      <StatusBar />
    </div>
  );
}
